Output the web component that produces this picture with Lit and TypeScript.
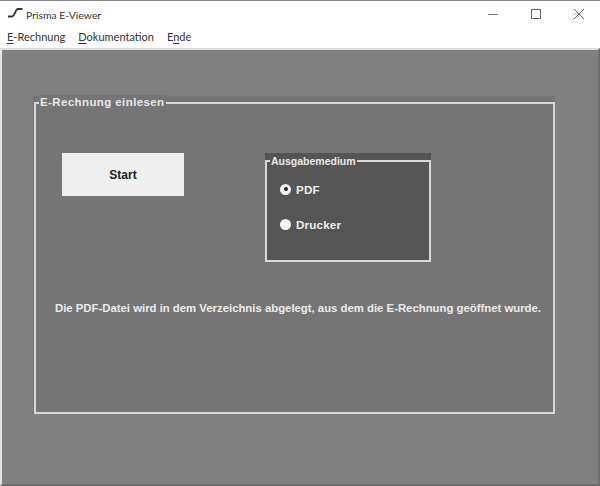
import { LitElement, html, css } from "lit";
import { customElement } from "lit/decorators.js";

@customElement("app-root")
export class AppRoot extends LitElement {
  static styles = css`
    :host { display: flex; flex-direction: column; width: 600px; height: 486px; background: #fff; overflow: hidden; font-family: "Liberation Sans", Arial, sans-serif; box-sizing: border-box; border-top: 1px solid #8a8a8a; }
    .title { height: 29px; flex: none; display: flex; align-items: center; padding-left: 7px; font: 10.4px Lato, "Noto Sans", sans-serif; color: #333; }
    .logo { width: 16px; height: 11px; margin-right: 2px; margin-top: -6px; }
    .name { margin-left: 1px; margin-top: -1px; }
    .controls { margin-left: auto; display: flex; margin-top: -3px; }
    .ctl { width: 43px; height: 29px; display: flex; align-items: center; justify-content: center; }
    .ctl svg { width: 10px; height: 10px; }
    .menu { height: 16px; flex: none; display: flex; align-items: center; gap: 13px; padding-left: 7px; margin-top: -2px; font: 11px Lato, "Noto Sans", sans-serif; color: #333; }
    .menu u { text-underline-offset: 2px; }
    .main { flex: 1; margin-top: 4px; border-top: 2px solid #dcdcdc; border-left: 2px solid #e4e4e4; border-right: 2px solid #6e6e6e; border-bottom: 2px solid #6e6e6e; background: #808080; padding: 46px 43px 0 31px; display: flex; flex-direction: column; min-height: 0; min-width: 0; }
    .group { background: #757575; padding: 6px 0 0 1px; height: 318px; box-sizing: border-box; display: flex; min-width: 0; }
    .frame { flex: 1; min-width: 0; border: 2px solid #d8d8d8; box-sizing: border-box; display: flex; flex-direction: column; }
    .legend { align-self: flex-start; margin: -9px 0 0 3px; padding: 0 1px; background: #757575; color: #e8e8e8; font-weight: 700; font-size: 11.5px; line-height: 14px; letter-spacing: 0.4px; }
    .row { display: flex; align-items: flex-start; margin: 44px 0 0 26px; }
    .start { width: 122px; height: 43px; border: none; background: #efefef; color: #222; font: 700 12px "Liberation Sans", Arial, sans-serif; padding: 0; }
    .inner { margin-left: 81px; width: 166px; height: 109px; background: #555; padding-top: 7px; box-sizing: border-box; display: flex; }
    .inner .legend { background: #555; margin: -8px 0 0 3px; font-size: 10.5px; letter-spacing: 0; }
    .opts { display: flex; flex-direction: column; gap: 19.5px; margin: 13px 0 0 13px; }
    .opt { display: flex; align-items: center; gap: 5px; height: 16px; color: #efefef; font-weight: 700; font-size: 11.6px; letter-spacing: 0.2px; }
    .radio { width: 11px; height: 11px; border-radius: 50%; background: #f4f4f4; display: flex; align-items: center; justify-content: center; }
    .dot { width: 4px; height: 4px; border-radius: 50%; background: #222; }
    .note { margin: 39px 0 0 19px; color: #ececec; font-weight: 700; font-size: 11.35px; line-height: 14px; white-space: nowrap; }
  `;

  render() {
    return html`
      <div class="title">
        <svg class="logo" viewBox="0 0 16 11"><path d="M1 9.5 H5 C8 9.5 8 2 11 2 H15.5" fill="none" stroke="#333" stroke-width="1.8"/></svg>
        <span class="name">Prisma E-Viewer</span>
        <div class="controls">
          <div class="ctl"><svg viewBox="0 0 10 10"><path d="M0 5.5 H10" stroke="#777" stroke-width="1"/></svg></div>
          <div class="ctl"><svg viewBox="0 0 10 10"><rect x="0.5" y="0.5" width="9" height="9" fill="none" stroke="#666" stroke-width="1"/></svg></div>
          <div class="ctl"><svg viewBox="0 0 10 10"><path d="M0 0 L10 10 M10 0 L0 10" stroke="#666" stroke-width="1"/></svg></div>
        </div>
      </div>
      <div class="menu">
        <span><u>E</u>-Rechnung</span>
        <span><u>D</u>okumentation</span>
        <span>E<u>n</u>de</span>
      </div>
      <div class="main">
        <div class="group">
          <div class="frame">
            <div class="legend">E-Rechnung einlesen</div>
            <div class="row">
              <button class="start">Start</button>
              <div class="inner">
                <div class="frame">
                  <div class="legend">Ausgabemedium</div>
                  <div class="opts">
                    <div class="opt"><span class="radio"><span class="dot"></span></span>PDF</div>
                    <div class="opt"><span class="radio"></span>Drucker</div>
                  </div>
                </div>
              </div>
            </div>
            <div class="note">Die PDF-Datei wird in dem Verzeichnis abgelegt, aus dem die E-Rechnung geöffnet wurde.</div>
          </div>
        </div>
      </div>
    `;
  }
}
